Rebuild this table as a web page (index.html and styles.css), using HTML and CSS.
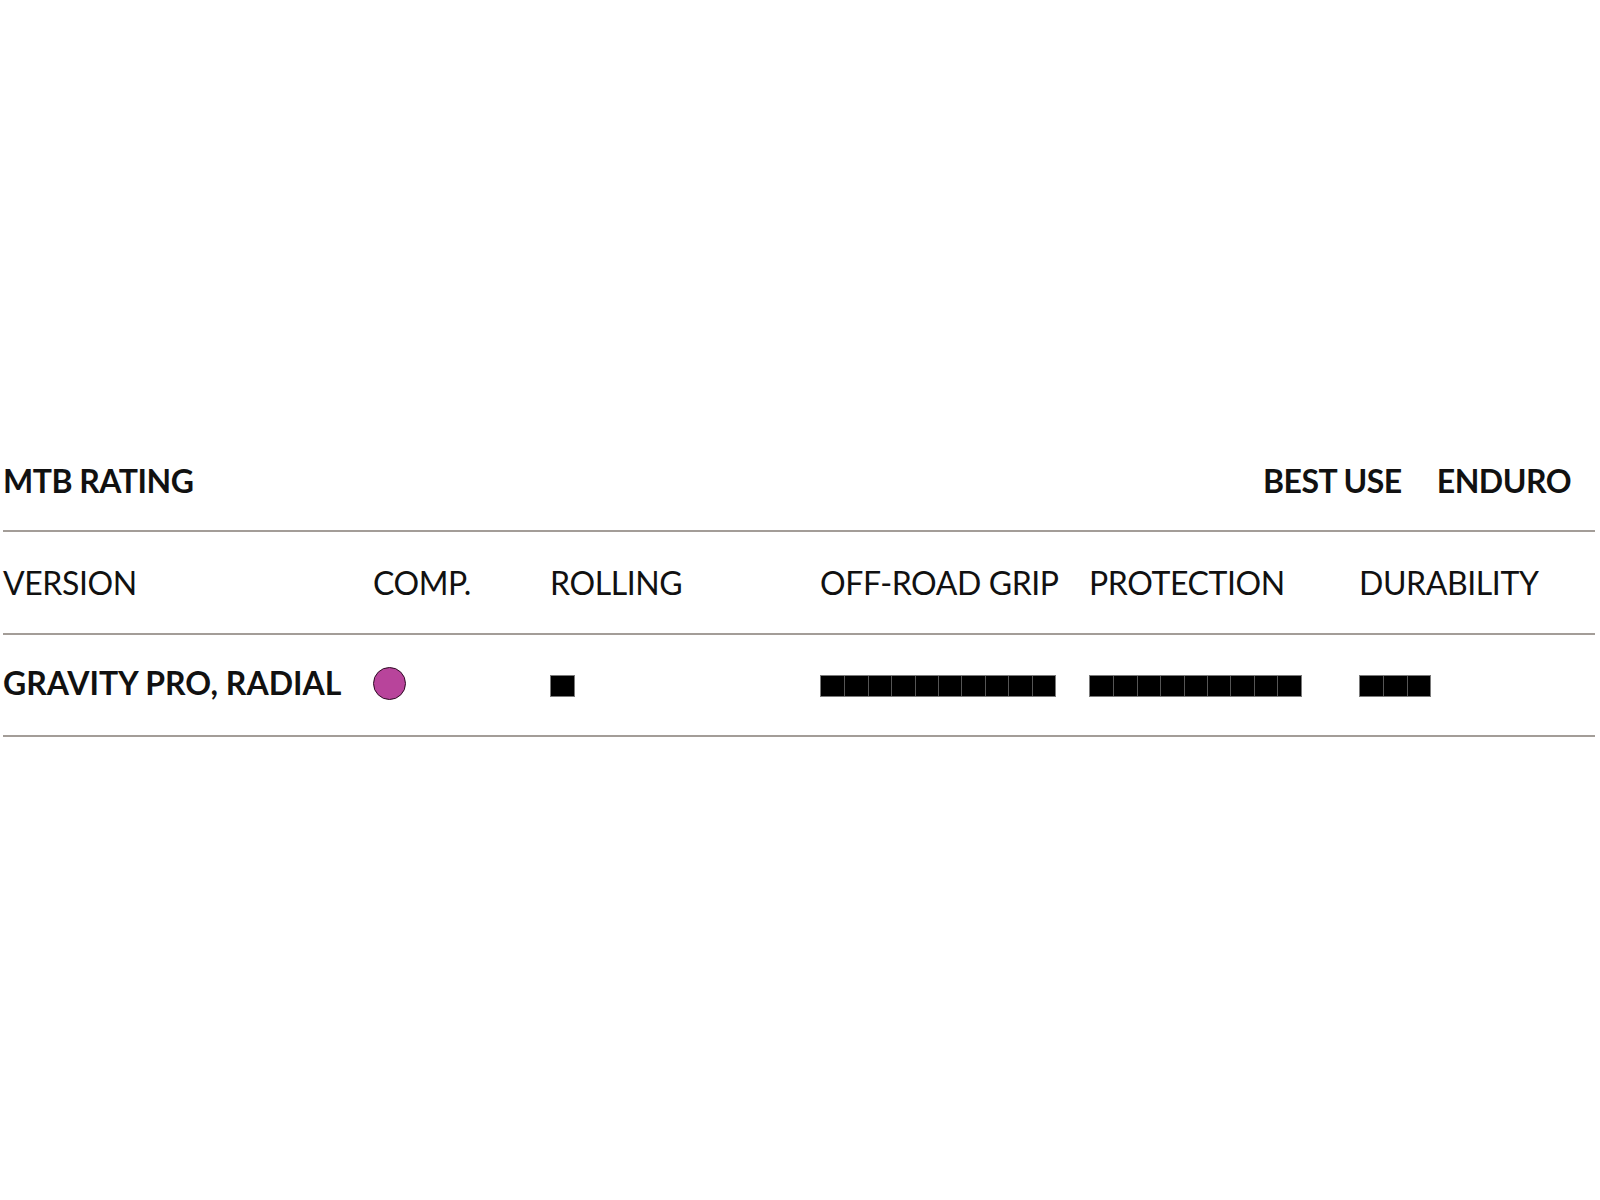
FILE: index.html
```html
<!DOCTYPE html>
<html lang="en">
<head>
<meta charset="utf-8">
<title>MTB Rating</title>
<link rel="stylesheet" href="styles.css">
</head>
<body>
<div class="rating">
  <div class="rating-head">
    <div class="title">MTB RATING</div>
    <div class="best">
      <span>BEST USE</span>
      <span>ENDURO</span>
    </div>
  </div>
  <div class="row labels">
    <div>VERSION</div>
    <div>COMP.</div>
    <div>ROLLING</div>
    <div>OFF-ROAD GRIP</div>
    <div>PROTECTION</div>
    <div>DURABILITY</div>
  </div>
  <div class="row values">
    <div class="name">GRAVITY PRO, RADIAL</div>
    <div><span class="dot"></span></div>
    <div><span class="bar"><span></span></span></div>
    <div><span class="bar"><span></span><span></span><span></span><span></span><span></span><span></span><span></span><span></span><span></span><span></span></span></div>
    <div><span class="bar"><span></span><span></span><span></span><span></span><span></span><span></span><span></span><span></span><span></span></span></div>
    <div><span class="bar"><span></span><span></span><span></span></span></div>
  </div>
</div>
</body>
</html>
```

FILE: styles.css
```css
* { box-sizing: border-box; }
html, body { margin: 0; padding: 0; background: #fff; }
body {
  font-family: Lato, "Liberation Sans", sans-serif;
  color: #111;
}
.rating {
  margin: 460px 5px 0 3px;
}
.rating-head {
  display: flex;
  justify-content: space-between;
  font-weight: 700;
  font-size: 32px;
  line-height: 40px;
  letter-spacing: -0.5px;
  padding: 1px 24px 29px 0;
  border-bottom: 2px solid #a39d98;
}
.best {
  display: flex;
  gap: 35px;
}
.row {
  display: grid;
  grid-template-columns: 370px 177px 270px 269px 270px 1fr;
  font-size: 32px;
  line-height: 40px;
  border-bottom: 2px solid #a39d98;
}
.labels {
  font-weight: 400;
  letter-spacing: -0.4px;
  padding: 31px 0 30px;
}
.values {
  font-weight: 700;
  padding: 28px 0 31px;
  align-items: start;
}
.dot {
  display: block;
  width: 33px;
  height: 33px;
  margin-top: 4px;
  border-radius: 50%;
  background: #b8449b;
  border: 1.5px solid #2e0c24;
}
.bar {
  display: inline-flex;
  margin-top: 12px;
  border: 1px solid #7a7a7a;
  background: #000;
}
.bar span {
  display: block;
  width: 23.4px;
  height: 20px;
  background: #000;
  border-left: 1px solid #555;
}
.bar span:first-child { border-left: none; }
```
